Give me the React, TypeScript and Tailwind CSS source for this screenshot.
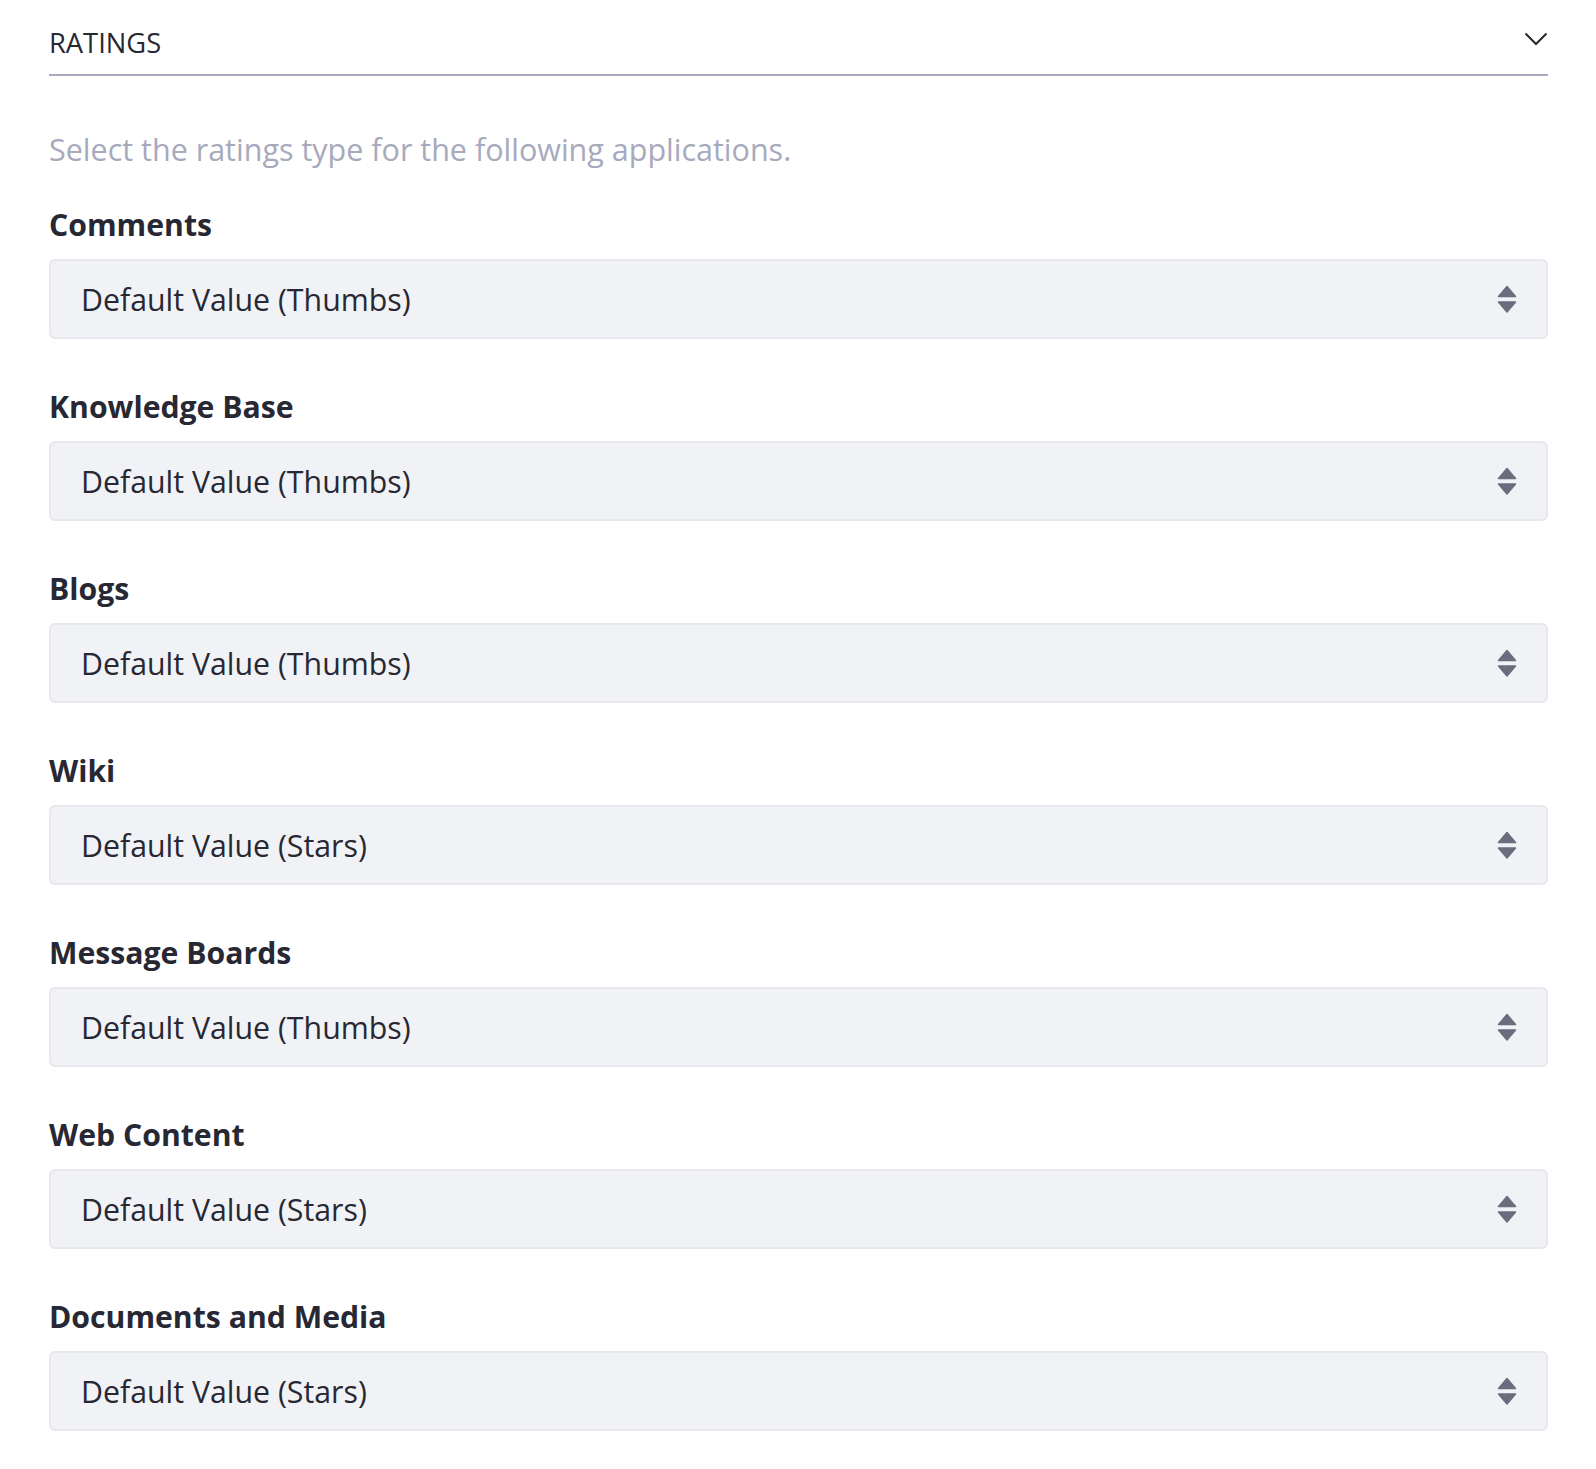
const FIELDS: { label: string; value: string }[] = [
  { label: "Comments", value: "Default Value (Thumbs)" },
  { label: "Knowledge Base", value: "Default Value (Thumbs)" },
  { label: "Blogs", value: "Default Value (Thumbs)" },
  { label: "Wiki", value: "Default Value (Stars)" },
  { label: "Message Boards", value: "Default Value (Thumbs)" },
  { label: "Web Content", value: "Default Value (Stars)" },
  { label: "Documents and Media", value: "Default Value (Stars)" },
];

function CaretDouble() {
  return (
    <svg width="20" height="28" viewBox="0 0 20 28" className="shrink-0" aria-hidden>
      <path d="M10 1.5 L18.5 11.5 L1.5 11.5 Z" fill="#6b6c7e" stroke="#6b6c7e" strokeWidth="1.5" strokeLinejoin="round" />
      <path d="M1.5 17 L18.5 17 L10 27 Z" fill="#6b6c7e" stroke="#6b6c7e" strokeWidth="1.5" strokeLinejoin="round" />
    </svg>
  );
}

function SelectField({ label, value }: { label: string; value: string }) {
  return (
    <div className="mb-[47px]">
      <label className="mb-[13px] block text-[30.2px] font-bold leading-[42px] text-[#272833]">{label}</label>
      <div className="flex h-[80px] items-center justify-between rounded-[6px] border-2 border-[#e7e7ed] bg-[#f1f2f5] pl-[30px] pr-[29px]">
        <span className="pt-px text-[30.3px] text-[#272833]">{value}</span>
        <CaretDouble />
      </div>
    </div>
  );
}

export default function App() {
  return (
    <div className="min-h-[1469px] bg-white pl-[49px] pr-[48px] font-['Open_Sans',sans-serif]">
      <div className="flex items-start justify-between border-b-2 border-[#a7a9bc] pb-[10px] pt-[22px]">
        <span className="text-[27.3px] uppercase leading-[42px] text-[#272833]">Ratings</span>
        <svg width="24" height="14" viewBox="0 0 24 14" className="mt-[10px]" aria-hidden>
          <path d="M1.5 1.5 L12 12 L22.5 1.5" fill="none" stroke="#272833" strokeWidth="2" />
        </svg>
      </div>
      <p className="mb-[31px] mt-[49px] text-[30.5px] leading-[48px] text-[#a7a9bc]">
        Select the ratings type for the following applications.
      </p>
      {FIELDS.map((f) => (
        <SelectField key={f.label} label={f.label} value={f.value} />
      ))}
    </div>
  );
}
